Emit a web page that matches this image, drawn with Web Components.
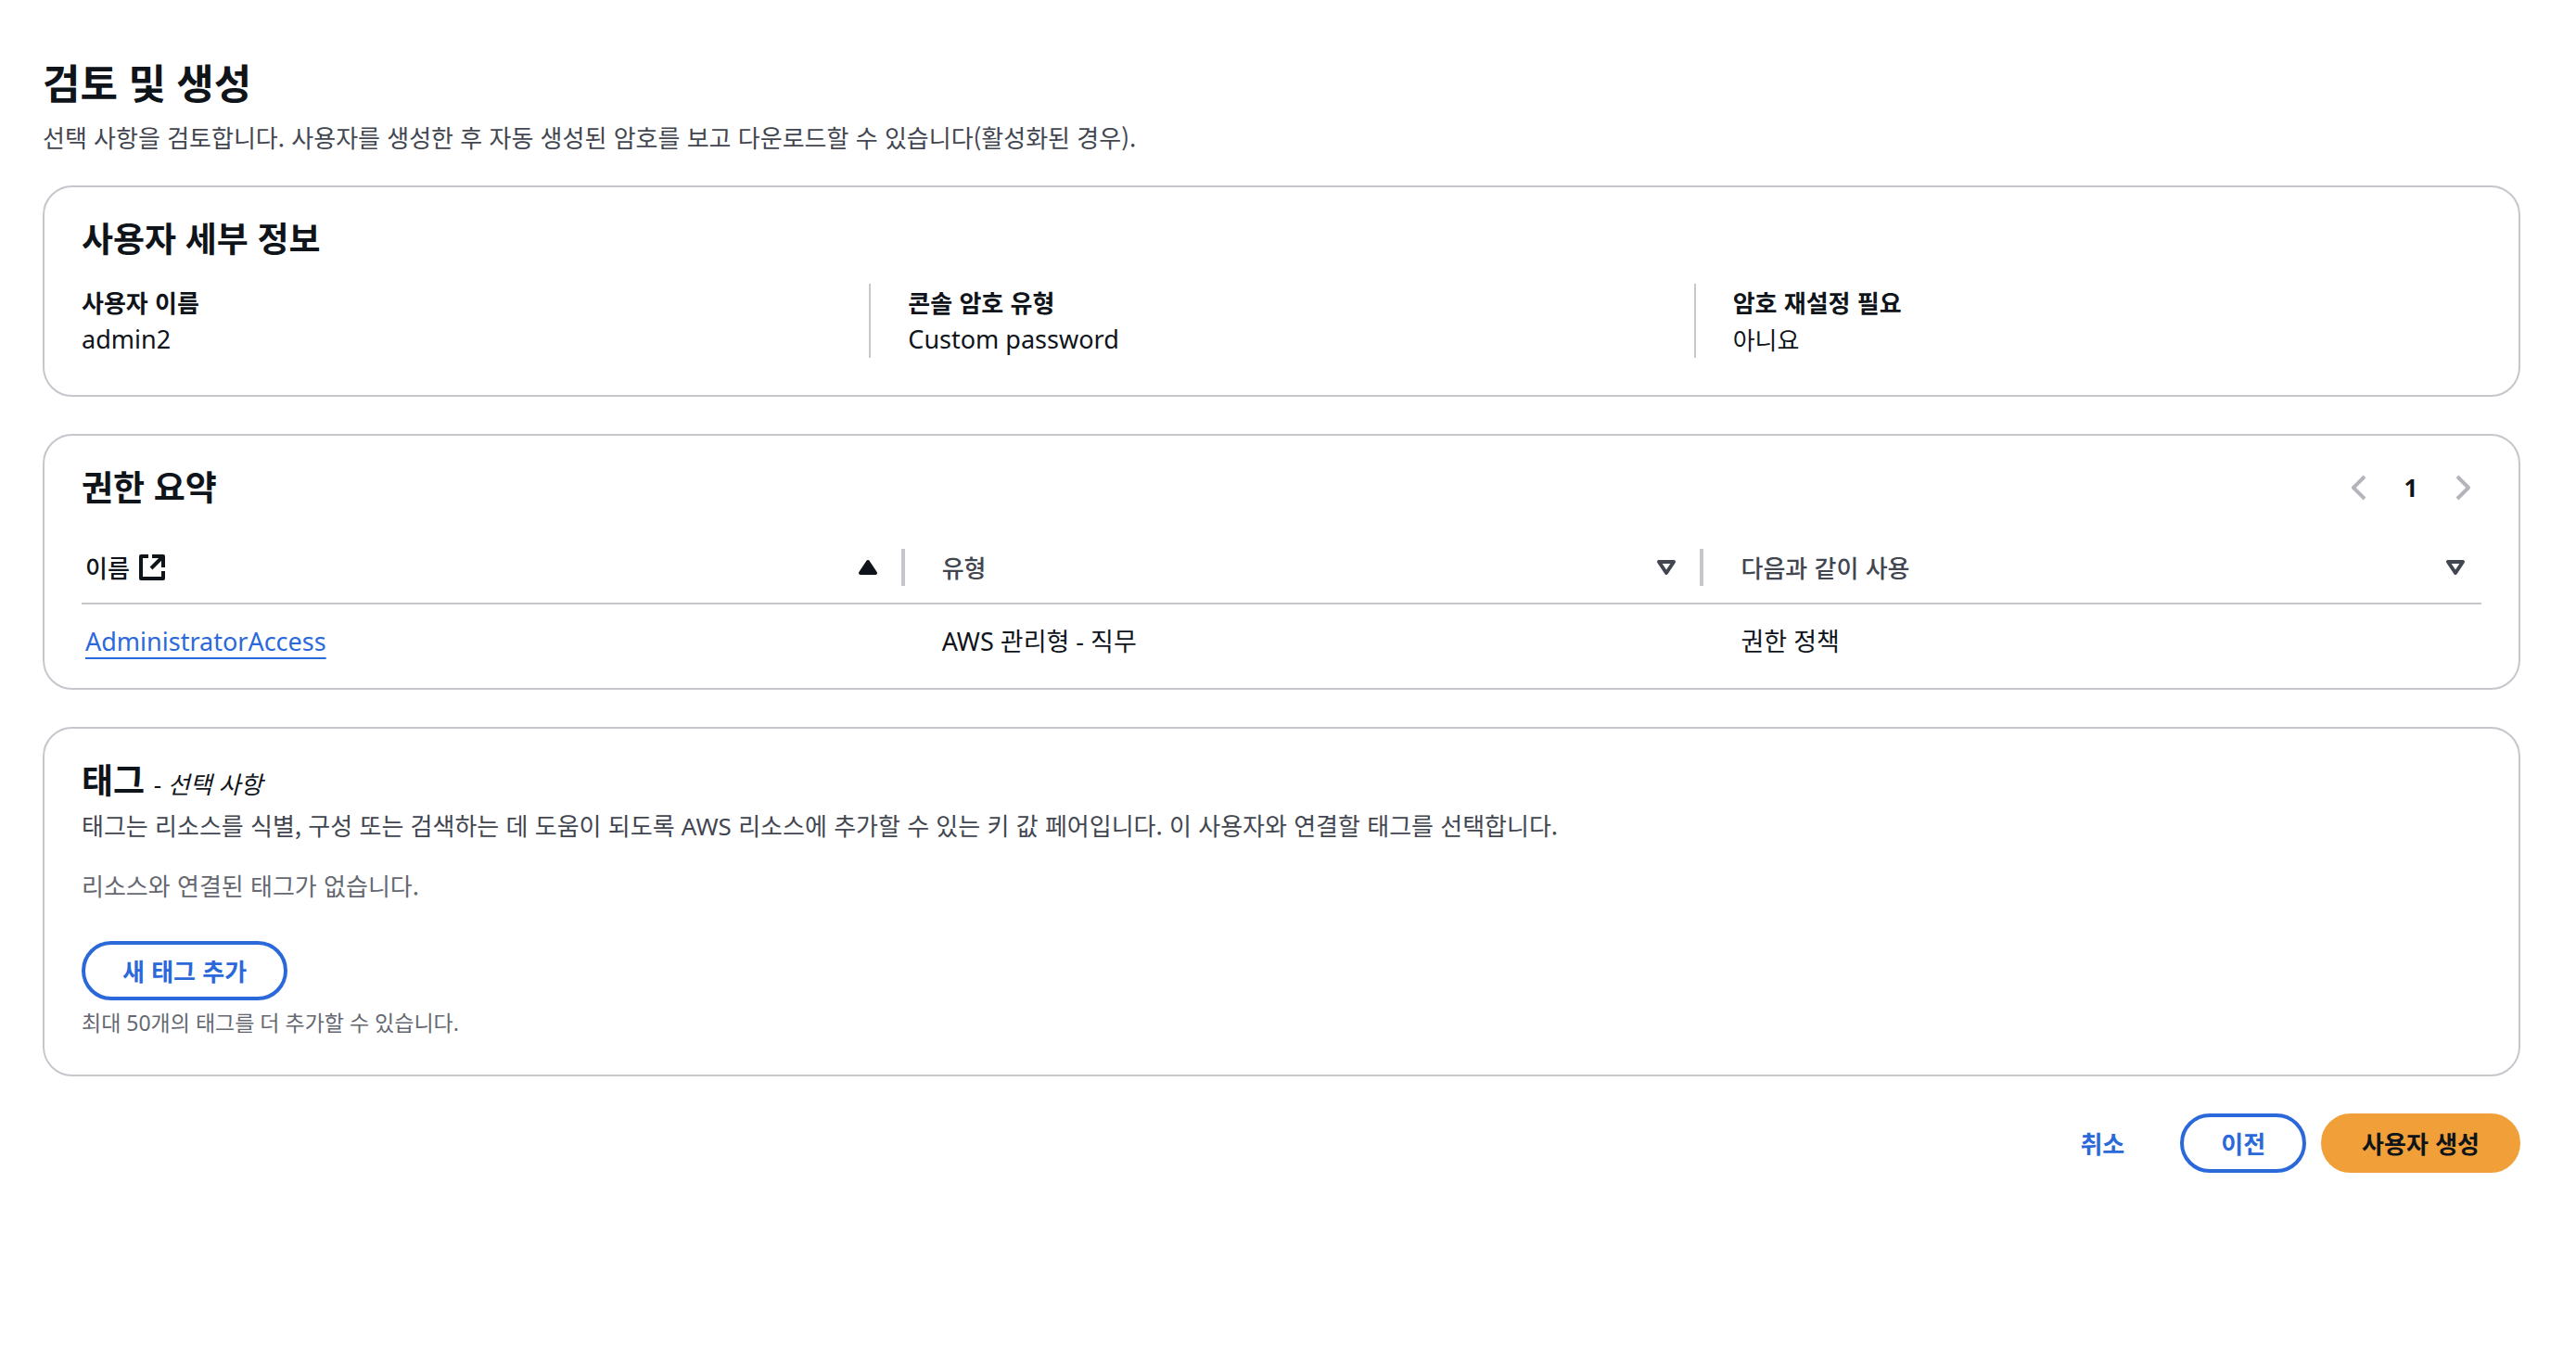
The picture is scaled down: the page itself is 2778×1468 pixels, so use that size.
<!DOCTYPE html>
<html lang="ko">
<head>
<meta charset="utf-8">
<meta name="viewport" content="width=device-width, initial-scale=1">
<title>검토 및 생성</title>
<style>
  :root {
    --text: #0f141a;
    --text-secondary: #424650;
    --text-muted: #656871;
    --line: #c6c6cd;
    --link: #2b69da;
    --primary: #f19f38;
    --disabled: #b4b4bb;
    --latin: "Noto Sans", "Noto Sans CJK KR", sans-serif;
  }
  body {
    margin: 0;
    background: #fff;
    color: var(--text);
    font: 400 26px/40px "Noto Sans CJK KR", "Noto Sans", sans-serif;
  }
</style>
</head>
<body>
<review-page></review-page>

<script>
const define = (name, html, setup) => {
  const template = document.createElement('template');
  template.innerHTML = html;
  customElements.define(name, class extends HTMLElement {
    constructor() {
      super();
      this.attachShadow({ mode: 'open' }).append(template.content.cloneNode(true));
    }
    connectedCallback() { if (setup) setup(this, this.shadowRoot); }
  });
};

const ICONS = {
  external: '<path d="M12 4H4v24h24v-8M16 4h12v12M27 5L15 17"/>',
  prev: '<path d="M22 4L10 16l12 12"/>',
  next: '<path d="M10 4l12 12-12 12"/>',
  asc: '<path d="M16 10l8 12H8z" fill="currentColor"/>',
  desc: '<path d="M8 10h16l-8 12z"/>'
};

define('ui-icon', `
  <style>
    :host { display: inline-flex; flex: none; width: 32px; height: 32px; }
    svg { width: 100%; height: 100%; fill: none; stroke: currentColor; stroke-width: 4; stroke-linejoin: round; }
  </style>
  <svg viewBox="0 0 32 32" aria-hidden="true"></svg>`,
  (host, root) => { root.querySelector('svg').innerHTML = ICONS[host.getAttribute('name')]; });

define('ui-button', `
  <style>
    :host { display: inline-flex; }
    button {
      box-sizing: border-box; height: 64px; padding: 0 40px; cursor: pointer;
      border: 4px solid var(--link); border-radius: 32px; background: #fff;
      color: var(--link); font: inherit; font-weight: 700; white-space: nowrap;
    }
    :host([variant="link"]) button { border-color: transparent; background: none; }
    :host([variant="primary"]) button { border-color: var(--primary); background: var(--primary); color: var(--text); }
  </style>
  <button type="button"><slot></slot></button>`);

define('ui-card', `
  <style>
    :host { display: block; border: 2px solid var(--line); border-radius: 32px; padding: 32px 40px 40px; background: #fff; }
    :host([flush]) { padding-bottom: 10px; }
    header { display: flex; justify-content: space-between; align-items: center; height: 48px; }
    h2 { margin: 0; font-family: var(--latin); font-size: 37px; line-height: 48px; font-weight: 700; }
    .body { margin-top: 24px; }
    :host([compact]) .body { margin-top: 4px; }
  </style>
  <header><h2><slot name="title"></slot></h2><slot name="actions"></slot></header>
  <div class="body"><slot></slot></div>`);

define('key-values', `
  <style>
    dl { display: grid; grid-template-columns: repeat(3, 1fr); column-gap: 80px; margin: 0; }
    :host { display: block; }
    div { height: 80px; }
    div + div { margin-left: -40px; padding-left: 40px; border-left: 2px solid var(--line); }
    dt { font-weight: 700; }
    dd { margin: 0; }
    .latin { font-family: var(--latin); font-size: 27px; }
  </style>
  <dl>
    <div><dt>사용자 이름</dt><dd class="latin">admin2</dd></div>
    <div><dt>콘솔 암호 유형</dt><dd class="latin">Custom password</dd></div>
    <div><dt>암호 재설정 필요</dt><dd>아니요</dd></div>
  </dl>`);

define('page-nav', `
  <style>
    :host { display: block; }
    nav { display: flex; align-items: center; gap: 24px; padding-right: 4px; }
    button { display: flex; padding: 0; border: 0; background: none; font: inherit; font-weight: 700; color: var(--text); }
    .page { width: 32px; justify-content: center; font-family: var(--latin); }
    button:disabled { color: var(--disabled); }
  </style>
  <nav aria-label="페이지">
    <button type="button" disabled aria-label="이전 페이지"><ui-icon name="prev"></ui-icon></button>
    <button type="button" class="page" aria-current="page">1</button>
    <button type="button" disabled aria-label="다음 페이지"><ui-icon name="next"></ui-icon></button>
  </nav>`);

define('policy-table', `
  <style>
    :host { display: block; }
    table { width: 100%; table-layout: fixed; border-collapse: separate; border-spacing: 0; }
    .c1 { width: 34.3%; }
    .c2 { width: 33.3%; }
    th, td { padding: 0 0 0 40px; text-align: left; }
    th:first-child, td:first-child { padding-left: 4px; }
    th { height: 76px; border-bottom: 2px solid var(--line); font-weight: 500; color: var(--text-secondary); }
    th.sorted { color: var(--text); }
    td { height: 80px; font-family: var(--latin); font-size: 27px; }
    .head { display: flex; align-items: center; justify-content: space-between; height: 40px; padding-right: 20px; border-right: 4px solid var(--line); }
    th:last-child .head { padding-right: 12px; border-right: 0; }
    .label { display: flex; align-items: center; gap: 8px; }
    button { display: flex; padding: 0; border: 0; background: none; color: inherit; }
    a { color: var(--link); text-decoration: underline; text-decoration-thickness: 2px; text-underline-offset: 7px; }
  </style>
  <table>
    <colgroup><col class="c1"><col class="c2"><col></colgroup>
    <thead>
      <tr>
        <th class="sorted" scope="col" aria-sort="ascending"><div class="head"><span class="label">이름 <ui-icon name="external"></ui-icon></span><button type="button" aria-label="이름 정렬"><ui-icon name="asc"></ui-icon></button></div></th>
        <th scope="col"><div class="head">유형<button type="button" aria-label="유형 정렬"><ui-icon name="desc"></ui-icon></button></div></th>
        <th scope="col"><div class="head">다음과 같이 사용<button type="button" aria-label="사용 정렬"><ui-icon name="desc"></ui-icon></button></div></th>
      </tr>
    </thead>
    <tbody>
      <tr><td><a href="#">AdministratorAccess</a></td><td>AWS 관리형 - 직무</td><td>권한 정책</td></tr>
    </tbody>
  </table>`);

define('tag-editor', `
  <style>
    :host { display: block; }
    p { margin: 0; }
    .about { color: var(--text-secondary); }
    .latin { font-family: var(--latin); }
    .empty { margin: 24px 0 40px; color: var(--text-muted); }
    ui-button { display: flex; }
    .limit { margin-top: 8px; font-family: var(--latin); font-size: 23px; line-height: 32px; color: var(--text-muted); }
  </style>
  <p class="about">태그는 리소스를 식별, 구성 또는 검색하는 데 도움이 되도록 <span class="latin">AWS</span> 리소스에 추가할 수 있는 키 값 페어입니다. 이 사용자와 연결할 태그를 선택합니다.</p>
  <p class="empty">리소스와 연결된 태그가 없습니다.</p>
  <ui-button>새 태그 추가</ui-button>
  <p class="limit">최대 50개의 태그를 더 추가할 수 있습니다.</p>`);

define('review-page', `
  <style>
    :host { display: block; padding: 60px 60px 40px 46px; }
    h1 { margin: 0 0 8px; font-family: var(--latin); font-size: 44px; line-height: 60px; font-weight: 700; }
    .intro { margin: 0; color: var(--text-secondary); }
    .cards { display: flex; flex-direction: column; gap: 40px; margin-top: 32px; }
    .optional { font-size: 26px; line-height: 40px; font-weight: 400; }
    footer { display: flex; justify-content: flex-end; gap: 16px; margin-top: 40px; }
  </style>
  <main>
    <h1>검토 및 생성</h1>
    <p class="intro">선택 사항을 검토합니다. 사용자를 생성한 후 자동 생성된 암호를 보고 다운로드할 수 있습니다(활성화된 경우).</p>
    <div class="cards">
      <ui-card><span slot="title">사용자 세부 정보</span><key-values></key-values></ui-card>
      <ui-card flush><span slot="title">권한 요약</span><page-nav slot="actions"></page-nav><policy-table></policy-table></ui-card>
      <ui-card compact><span slot="title">태그 <span class="optional">- <i>선택 사항</i></span></span><tag-editor></tag-editor></ui-card>
    </div>
    <footer>
      <ui-button variant="link">취소</ui-button>
      <ui-button>이전</ui-button>
      <ui-button variant="primary">사용자 생성</ui-button>
    </footer>
  </main>`);
</script>
</body>
</html>
